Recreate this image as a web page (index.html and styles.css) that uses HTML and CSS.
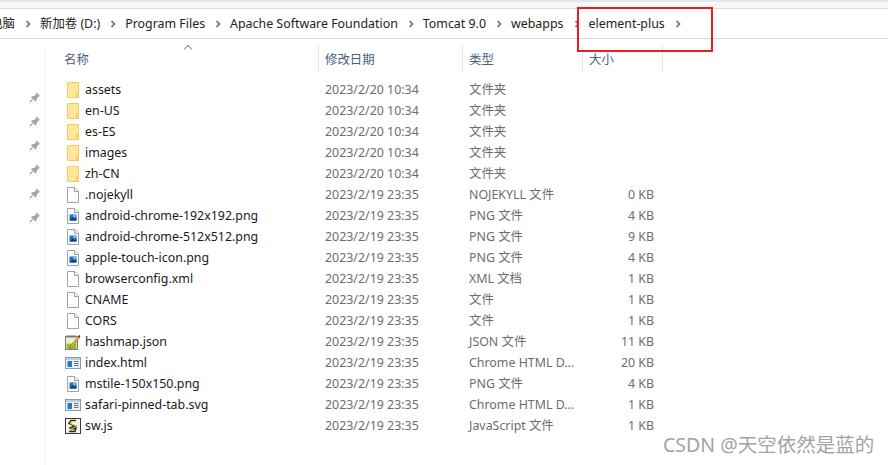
FILE: index.html
```html
<!DOCTYPE html>
<html lang="zh-CN">
<head>
<meta charset="utf-8">
<title>element-plus</title>
<link rel="stylesheet" href="styles.css">
</head>
<body>
<svg class="defs" width="0" height="0" aria-hidden="true">
  <symbol id="folder" viewBox="0 0 16 16">
    <path d="M2.500 .5h11v15h-11z" fill="#fee69d" stroke="#f0ca62"/>
    <path d="M11.500 15.500v-5h2v5z" fill="#fbdc83" stroke="#f0ca62"/>
  </symbol>
  <symbol id="blank" viewBox="0 0 16 16">
    <path d="M2.500 .5h7.500l3.500 3.500v11.500h-11z" fill="#fdfdfd" stroke="#a3a3a3"/>
    <path d="M9.500 .5v4h4" fill="#f0f0f0" stroke="#a3a3a3"/>
  </symbol>
  <symbol id="png" viewBox="0 0 16 16">
    <use href="#blank"/>
    <rect x="4.500" y="6.500" width="7" height="6" fill="#1f6fc4"/>
    <path d="M4.500 12.500l3-3 2 1.500 2-1v2.500z" fill="#123e73"/>
    <rect x="8.500" y="7" width="2" height="2" fill="#9fd3f5"/>
  </symbol>
  <symbol id="html" viewBox="0 0 16 16">
    <rect x=".5" y="2.500" width="15" height="11" fill="#eef1f4" stroke="#8d9aa6"/>
    <rect x="1" y="3" width="14" height="2" fill="#c3ccd4"/>
    <rect x="2.500" y="6" width="4.500" height="6" fill="#1d7ad4"/>
    <path d="M9 6.500h4.500M9 8.500h4.500M9 10.500h4.500" stroke="#5f7690"/>
  </symbol>
  <symbol id="json" viewBox="0 0 16 16">
    <rect x=".5" y="2.500" width="12" height="13" fill="#eef3cf" stroke="#7d7d7d"/>
    <path d="M1.500 9.500h10v5.500h-10z" fill="#8fc23a"/>
    <path d="M2 1v3M4 1v3M6 1v3M8 1v3M10 1v3" stroke="#777"/>
    <path d="M5.500 12l8-10 1.500 1-7.500 10.500-2.500 1z" fill="#e9b840" stroke="#7b5b12" stroke-width=".6"/>
    <path d="M13 2.500l1-1.500 1.500 1-1 1.700z" fill="#9c1d1d"/>
  </symbol>
  <symbol id="js" viewBox="0 0 16 16">
    <rect x=".5" y=".5" width="15" height="15" fill="#f6f6f0" stroke="#3a3a3a"/>
    <path d="M11 2.500h-5l-2 3 6 2.500-5 2 2 1.500 4-1.500-1 3.500h-6" fill="none" stroke="#2b2b14" stroke-width="1.500"/>
    <path d="M11 3.500h-4l-1.500 2 6 2.500M6 10.500l2 1" fill="none" stroke="#e8d62c" stroke-width="1.100"/>
  </symbol>
  <symbol id="pin" viewBox="0 0 12 12">
    <path d="M7 1l4 4-1.200.6-2 2 -.3 2.400-1.300 .6-4-4 .6-1.300 2.400-.3 2-2z" fill="#9aa7b4"/>
    <path d="M3.500 8.500l-2.500 2.500" stroke="#9aa7b4" stroke-width="1.200"/>
  </symbol>
  <symbol id="chev" viewBox="0 0 6 8">
    <path d="M1.500 1l3 3-3 3" fill="none" stroke="#808080" stroke-width="1.800"/>
  </symbol>
</svg>

<div class="topstrip"></div>

<nav class="crumbs">
  <span class="crumb clip">电脑</span><svg class="chev"><use href="#chev"/></svg>
  <span class="crumb">新加卷 (D:)</span><svg class="chev"><use href="#chev"/></svg>
  <span class="crumb">Program Files</span><svg class="chev"><use href="#chev"/></svg>
  <span class="crumb">Apache Software Foundation</span><svg class="chev"><use href="#chev"/></svg>
  <span class="crumb">Tomcat 9.0</span><svg class="chev"><use href="#chev"/></svg>
  <span class="crumb">webapps</span><svg class="chev"><use href="#chev"/></svg>
  <span class="crumb">element-plus</span><svg class="chev"><use href="#chev"/></svg>
</nav>

<main class="pane">
  <aside class="pins">
    <svg class="pin"><use href="#pin"/></svg>
    <svg class="pin"><use href="#pin"/></svg>
    <svg class="pin"><use href="#pin"/></svg>
    <svg class="pin"><use href="#pin"/></svg>
    <svg class="pin"><use href="#pin"/></svg>
    <svg class="pin"><use href="#pin"/></svg>
  </aside>
  <section class="list">
    <div class="head">
      <div class="hcell hname">名称</div>
      <div class="hcell">修改日期</div>
      <div class="hcell">类型</div>
      <div class="hcell">大小</div>
    </div>
    <div class="rows">
      <div class="row"><span class="name"><svg class="ico"><use href="#folder"/></svg>assets</span><span class="cell">2023/2/20 10:34</span><span class="cell">文件夹</span><span class="size"></span></div>
      <div class="row"><span class="name"><svg class="ico"><use href="#folder"/></svg>en-US</span><span class="cell">2023/2/20 10:34</span><span class="cell">文件夹</span><span class="size"></span></div>
      <div class="row"><span class="name"><svg class="ico"><use href="#folder"/></svg>es-ES</span><span class="cell">2023/2/20 10:34</span><span class="cell">文件夹</span><span class="size"></span></div>
      <div class="row"><span class="name"><svg class="ico"><use href="#folder"/></svg>images</span><span class="cell">2023/2/20 10:34</span><span class="cell">文件夹</span><span class="size"></span></div>
      <div class="row"><span class="name"><svg class="ico"><use href="#folder"/></svg>zh-CN</span><span class="cell">2023/2/20 10:34</span><span class="cell">文件夹</span><span class="size"></span></div>
      <div class="row"><span class="name"><svg class="ico"><use href="#blank"/></svg>.nojekyll</span><span class="cell">2023/2/19 23:35</span><span class="cell">NOJEKYLL 文件</span><span class="size">0 KB</span></div>
      <div class="row"><span class="name"><svg class="ico"><use href="#png"/></svg>android-chrome-192x192.png</span><span class="cell">2023/2/19 23:35</span><span class="cell">PNG 文件</span><span class="size">4 KB</span></div>
      <div class="row"><span class="name"><svg class="ico"><use href="#png"/></svg>android-chrome-512x512.png</span><span class="cell">2023/2/19 23:35</span><span class="cell">PNG 文件</span><span class="size">9 KB</span></div>
      <div class="row"><span class="name"><svg class="ico"><use href="#png"/></svg>apple-touch-icon.png</span><span class="cell">2023/2/19 23:35</span><span class="cell">PNG 文件</span><span class="size">4 KB</span></div>
      <div class="row"><span class="name"><svg class="ico"><use href="#blank"/></svg>browserconfig.xml</span><span class="cell">2023/2/19 23:35</span><span class="cell">XML 文档</span><span class="size">1 KB</span></div>
      <div class="row"><span class="name"><svg class="ico"><use href="#blank"/></svg>CNAME</span><span class="cell">2023/2/19 23:35</span><span class="cell">文件</span><span class="size">1 KB</span></div>
      <div class="row"><span class="name"><svg class="ico"><use href="#blank"/></svg>CORS</span><span class="cell">2023/2/19 23:35</span><span class="cell">文件</span><span class="size">1 KB</span></div>
      <div class="row"><span class="name"><svg class="ico"><use href="#json"/></svg>hashmap.json</span><span class="cell">2023/2/19 23:35</span><span class="cell">JSON 文件</span><span class="size">11 KB</span></div>
      <div class="row"><span class="name"><svg class="ico"><use href="#html"/></svg>index.html</span><span class="cell">2023/2/19 23:35</span><span class="cell">Chrome HTML D...</span><span class="size">20 KB</span></div>
      <div class="row"><span class="name"><svg class="ico"><use href="#png"/></svg>mstile-150x150.png</span><span class="cell">2023/2/19 23:35</span><span class="cell">PNG 文件</span><span class="size">4 KB</span></div>
      <div class="row"><span class="name"><svg class="ico"><use href="#html"/></svg>safari-pinned-tab.svg</span><span class="cell">2023/2/19 23:35</span><span class="cell">Chrome HTML D...</span><span class="size">1 KB</span></div>
      <div class="row"><span class="name"><svg class="ico"><use href="#js"/></svg>sw.js</span><span class="cell">2023/2/19 23:35</span><span class="cell">JavaScript 文件</span><span class="size">1 KB</span></div>
    </div>
  </section>
</main>

<div class="sort"></div>
<div class="mark"></div>
<div class="watermark">CSDN @天空依然是蓝的</div>
</body>
</html>
```

FILE: styles.css
```css
* { box-sizing: border-box; }

html, body {
  margin: 0;
  height: 465px;
  overflow: hidden;
  background: #fff;
}

body {
  position: relative;
  font-family: "Noto Sans", "Noto Sans CJK SC", sans-serif;
  font-size: 12.4px;
  color: #1a1a1a;
}

.defs { position: absolute; }

.topstrip {
  height: 9px;
  background: #f8f8f8;
  border-top: 2px solid #e6e6e6;
  border-bottom: 1px solid #dcdcdc;
}

.crumbs {
  display: flex;
  align-items: center;
  height: 30px;
  border-bottom: 1px solid #d9d9d9;
  white-space: nowrap;
  overflow: hidden;
}

.crumb { line-height: 28px; color: #222; }
.crumb.clip { width: 15px; direction: rtl; overflow: hidden; }

.chev {
  width: 6px;
  height: 8px;
  margin: 1px 9px 0 10px;
  flex: none;
}

.pane {
  display: grid;
  grid-template-columns: 46px 1fr;
}

.pins {
  display: flex;
  flex-direction: column;
  align-items: flex-start;
  gap: 12px;
  padding: 45px 0 0 29px;
  height: 426px;
  border-right: 1px solid #f3f3f3;
  margin-top: 7px;
}

.pin { width: 12px; height: 12px; flex: none; }

.head {
  display: grid;
  grid-template-columns: 273px 144px 120px 80px;
  height: 27px;
  margin-top: 7px;
  color: #4c607a;
}

.hcell {
  padding-left: 6px;
  line-height: 27px;
  border-right: 1px solid #e5e5e5;
}

.hcell.hname { padding-left: 18px; }

.rows {
  padding-top: 6px;
}

.row {
  display: grid;
  grid-template-columns: 273px 144px 113px 78px;
  height: 21px;
  line-height: 21px;
  align-items: center;
}

.name {
  display: flex;
  align-items: center;
  gap: 4px;
  padding-left: 19px;
  color: #1a1a1a;
}

.ico { width: 16px; height: 16px; flex: none; }

.cell { padding-left: 6px; color: #6d6d6d; white-space: nowrap; }

.size { text-align: right; color: #6d6d6d; }

.sort {
  position: absolute;
  left: 185px;
  top: 46px;
  width: 6px;
  height: 6px;
  border-left: 1px solid #8c8c8c;
  border-top: 1px solid #8c8c8c;
  transform: rotate(45deg);
}

.mark {
  position: absolute;
  left: 577px;
  top: 7px;
  width: 136px;
  height: 45px;
  border: 2px solid #ed1c24;
}

.watermark {
  position: absolute;
  left: 663px;
  top: 433px;
  font-size: 19.5px;
  line-height: 24px;
  color: #a3a3a3;
  white-space: nowrap;
}
```
